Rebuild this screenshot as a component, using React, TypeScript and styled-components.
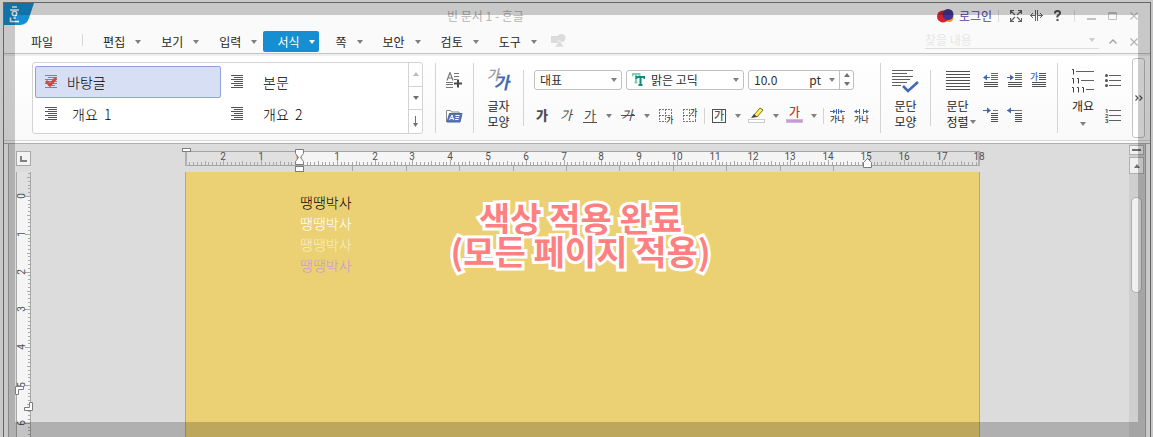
import React from "react";
import styled, { createGlobalStyle, css } from "styled-components";

const fontStack = '"Noto Sans CJK KR", "Noto Sans", sans-serif';

const GlobalStyle = createGlobalStyle`
  * { box-sizing: border-box; }
  body {
    margin: 0;
    background: #fafafa;
    color: #262626;
    font: 12px/16px ${fontStack};
  }
  button, input, select {
    margin: 0;
    padding: 0;
    border: 0;
    background: transparent;
    color: inherit;
    font: inherit;
    outline: 0;
  }
  svg { display: block; flex: none; }
`;

/* ---------- window frame ---------- */

const Screen = styled.div`
  height: 100vh;
  padding: 2px 2px 0 3px;
  overflow: hidden;
`;

const CaptureFrame = styled.div`
  position: fixed;
  inset: 0;
  border: 15px solid rgba(0, 0, 0, 0.2);
  pointer-events: none;
`;

const Window = styled.div`
  display: flex;
  flex-direction: column;
  height: 100%;
  border: 1px solid #808080;
  border-bottom: 0;
`;

const TitleBar = styled.header`
  display: flex;
  align-items: center;
  height: 25px;
`;

const Logo = styled.svg`
  align-self: flex-start;
`;

const Title = styled.h1`
  flex: 1;
  margin: 0;
  text-align: center;
  font: 12px/16px ${fontStack};
  color: #b4b4b4;
`;

const LoginLink = styled.a`
  display: flex;
  align-items: center;
  gap: 5px;
  margin-right: 6px;
  color: #5443a5;
  text-decoration: none;
`;

const TitleDivider = styled.span`
  width: 1px;
  height: 12px;
  background: #dcdcdc;
`;

const TitleButton = styled.button<{ $faint?: boolean }>`
  display: flex;
  align-items: center;
  justify-content: center;
  width: 21px;
  height: 21px;
  color: ${(p) => (p.$faint ? "#c2c2c2" : "#606060")};
`;

const TitleGroup = styled.div`
  display: flex;
  margin: 0 6px;
`;

/* ---------- menu bar ---------- */

const MenuBar = styled.nav`
  display: flex;
  align-items: flex-end;
  height: 26px;
  padding-bottom: 1px;
  border-bottom: 1px solid #c3c3c3;
`;

const FileMenu = styled.button`
  height: 21px;
  padding: 0 29px 0 27px;
`;

const MenuDivider = styled.span`
  align-self: center;
  width: 1px;
  height: 12px;
  margin-right: 6px;
  background: #d5d5d5;
`;

const MenuItem = styled.button<{ $active?: boolean }>`
  display: flex;
  align-items: center;
  gap: 10px;
  height: 21px;
  margin-right: 2px;
  padding: 0 4px 0 14px;
  border-radius: 2px;
  color: ${(p) => (p.$active ? "#ffffff" : "#262626")};
  background: ${(p) => (p.$active ? "#158fd1" : "transparent")};
  svg { color: ${(p) => (p.$active ? "#ffffff" : "#808080")}; }
`;

const MenuGlyph = styled.span`
  align-self: center;
  margin-left: 8px;
`;

const SearchBox = styled.label`
  display: flex;
  align-items: center;
  width: 174px;
  height: 18px;
  margin-left: auto;
  margin-bottom: 3px;
  padding-right: 4px;
  border-bottom: 1px solid #dedede;
  color: #cccccc;
  input {
    flex: 1;
    min-width: 0;
    &::placeholder { color: #e6e6e6; opacity: 1; }
  }
`;

const MenuTools = styled.div`
  display: flex;
  margin: 0 6px 0 3px;
`;

/* ---------- ribbon ---------- */

const RibbonShell = styled.section`
  padding-top: 2px;
  background: #efefef;
`;

const Ribbon = styled.div`
  display: flex;
  align-items: center;
  height: 85px;
  padding: 0 5px 1px 28px;
  border-bottom: 1px solid #d8d8d8;
  background: linear-gradient(#ffffff, #f9f9f9);
`;

const RibbonFoot = styled.div`
  height: 3px;
  border-bottom: 1px solid #adadad;
  background: #fbfbfb;
`;

const Divider = styled.span<{ $short?: boolean }>`
  flex: none;
  width: 1px;
  height: ${(p) => (p.$short ? 56 : 70)}px;
  background: #d4d4d4;
`;

const Gallery = styled.div`
  display: flex;
  flex: none;
  width: 391px;
  height: 72px;
  margin-right: 12px;
  border: 1px solid #d3d3d3;
  border-radius: 3px;
  background: #ffffff;
`;

const GalleryGrid = styled.div`
  display: grid;
  flex: 1;
  grid-template-columns: 186px 186px;
  grid-template-rows: 32px 32px;
  padding: 3px 0 0 2px;
`;

const StyleItem = styled.button<{ $selected?: boolean; $gap: number }>`
  display: flex;
  align-items: center;
  gap: ${(p) => p.$gap}px;
  padding: 0 9px;
  border: 1px solid ${(p) => (p.$selected ? "#8ea2dc" : "transparent")};
  border-radius: 2px;
  background: ${(p) => (p.$selected ? "#d7dff4" : "transparent")};
  color: #000000;
  font-size: 14px;
  font-weight: 300;
  white-space: pre;
`;

const GalleryScroll = styled.div`
  display: grid;
  grid-template-rows: 1fr 1fr 1fr;
  width: 14px;
  border-left: 1px solid #d3d3d3;
`;

const GalleryScrollButton = styled.button<{ $faint?: boolean }>`
  display: flex;
  align-items: center;
  justify-content: center;
  color: ${(p) => (p.$faint ? "#bdbdbd" : "#707070")};
  & + & { border-top: 1px solid #d3d3d3; }
`;

const IconGrid = styled.div<{ $columns: number; $wide?: boolean }>`
  display: grid;
  flex: none;
  grid-template-columns: repeat(${(p) => p.$columns}, ${(p) => (p.$wide ? 37 : 24)}px);
  grid-auto-rows: 36px;
`;

const IconButton = styled.button`
  display: flex;
  align-items: center;
  justify-content: center;
`;

const BigButton = styled.button<{ $width: number; $indent?: number }>`
  display: flex;
  flex: none;
  flex-direction: column;
  align-items: center;
  width: ${(p) => p.$width}px;
  height: 72px;
  margin-left: ${(p) => p.$indent ?? 0}px;
  padding-top: 7px;
  > svg:first-child { margin-bottom: 5px; }
`;

const LabelWithArrow = styled.span`
  display: flex;
  align-items: center;
  gap: 1px;
  padding-left: 7px;
  svg { color: #808080; }
`;

const CharGroup = styled.div`
  display: flex;
  flex: none;
  flex-direction: column;
  gap: 14px;
  height: 72px;
  padding: 8px 6px 0;
`;

const ComboRow = styled.div`
  display: flex;
  gap: 4px;
  padding-left: 4px;
`;

const Combo = styled.div<{ $width: number }>`
  display: flex;
  align-items: center;
  width: ${(p) => p.$width}px;
  height: 20px;
  padding-left: 5px;
  border: 1px solid #c0c0c0;
  border-radius: 3px;
  background: #ffffff;
  color: #303030;
  select, input {
    flex: 1;
    min-width: 0;
    height: 18px;
    appearance: none;
  }
`;

const ComboIcon = styled.span`
  margin-right: 6px;
`;

const ComboArrow = styled.span<{ $spaced?: boolean }>`
  display: flex;
  justify-content: center;
  width: 14px;
  margin-left: ${(p) => (p.$spaced ? 4 : 0)}px;
  color: #808080;
`;

const Spinner = styled.span`
  display: flex;
  flex-direction: column;
  width: 14px;
  height: 18px;
  border-left: 1px solid #c0c0c0;
  button {
    display: flex;
    flex: 1;
    align-items: center;
    justify-content: center;
    color: #707070;
  }
`;

const ToolRow = styled.div`
  display: flex;
  align-items: center;
  height: 24px;
`;

const Tool = styled.button<{ $arrow?: boolean }>`
  display: flex;
  align-items: center;
  justify-content: center;
  width: ${(p) => (p.$arrow ? 14 : 24)}px;
  height: 24px;
  color: #808080;
`;

const ToolDivider = styled.span`
  width: 1px;
  height: 16px;
  margin: 0 2px;
  background: #d4d4d4;
`;

const GroupGap = styled.span`
  flex: none;
  width: 7px;
`;

const OutlineArrow = styled.span`
  display: flex;
  align-items: center;
  height: 20px;
  color: #808080;
`;

const MoreButton = styled.button`
  display: flex;
  flex: none;
  align-items: center;
  justify-content: center;
  width: 13px;
  height: 80px;
  margin-left: auto;
  border: 1px solid #c4c4c4;
  border-radius: 3px;
  background: #ffffff;
`;

/* ---------- workspace ---------- */

const Workspace = styled.main`
  display: flex;
  flex: 1;
  min-height: 0;
  margin: 0 4px;
  border: solid #ababab;
  border-width: 0 1px;
  background: #dcdcdc;
  overflow: hidden;
`;

const RulerColumn = styled.div`
  display: flex;
  flex: none;
  flex-direction: column;
  gap: 6px;
  width: 22px;
  padding: 7px 0 0 7px;
`;

const TabCorner = styled.button`
  display: flex;
  flex: none;
  align-items: center;
  justify-content: center;
  width: 15px;
  height: 15px;
  border: 1px solid #a8a8a8;
  background: #f3f3f3;
`;

const Canvas = styled.div`
  display: flex;
  flex: 1;
  flex-direction: column;
  align-items: center;
  min-width: 0;
  padding: 4px 0 0 5px;
`;

const RulerSvg = styled.svg`
  overflow: visible;
  font: 10px Roboto, sans-serif;
`;

const Page = styled.article`
  position: relative;
  flex: 1;
  width: 795px;
  padding: 20px 114px;
  border: solid #a8a8a8;
  border-width: 0 1px;
  background: #ebd173;
`;

const Line = styled.p<{ $color: string }>`
  margin: 0;
  font-size: 14px;
  font-weight: 300;
  line-height: 21px;
  color: ${(p) => p.$color};
`;

const Caption = styled.strong`
  position: absolute;
  top: 29px;
  left: 0;
  right: 0;
  padding-right: 4px;
  text-align: center;
  font: 700 34px/33px ${fontStack};
  color: #ff8080;
  -webkit-text-stroke: 6px #ffffff;
  paint-order: stroke fill;
`;

const ScrollBar = styled.div`
  display: flex;
  flex: none;
  flex-direction: column;
  align-items: center;
  width: 16px;
  padding: 1px 1px 0 0;
  background: #cfcfcf;
`;

const scrollBox = css`
  display: flex;
  flex: none;
  align-items: center;
  justify-content: center;
  width: 15px;
  border: 1px solid #b0b0b0;
  background: #f0f0f0;
  color: #707070;
`;

const SplitButton = styled.button`
  ${scrollBox}
  height: 10px;
  margin-bottom: 2px;
`;

const ScrollUp = styled.button`
  ${scrollBox}
  height: 17px;
  margin-bottom: 23px;
`;

const ScrollThumb = styled.div`
  width: 11px;
  height: 96px;
  border: 1px solid #b0b0b0;
  border-radius: 5px;
  background: #f0f0f0;
`;

/* ---------- icons ---------- */

const Down = () => (
  <svg width="6" height="4" viewBox="0 0 6 4" fill="currentColor"><path d="M0 0h6L3 4z" /></svg>
);
const Up = () => (
  <svg width="6" height="4" viewBox="0 0 6 4" fill="currentColor"><path d="M0 4h6L3 0z" /></svg>
);

const Glyph = ({ x, y, size = 13, fill = "#505050", weight = 400, children }: {
  x: number; y: number; size?: number; fill?: string; weight?: number; children: React.ReactNode;
}) => (
  <text x={x} y={y} fontSize={size} fill={fill} fontWeight={weight} fontFamily={fontStack}>{children}</text>
);

const StyleLines = ({ checked }: { checked?: boolean }) => (
  <svg width="12" height="13" viewBox="0 0 12 13">
    <path
      d={checked ? "M0 .5h12M3 2.500h9M0 4.500h12M3 6.500h9M0 8.500h12M3 10.500h7M0 12.500h12" : "M0 .5h12M3 2.500h9M0 4.500h12M3 6.500h9M0 8.500h12M3 10.500h9M0 12.500h12"}
      stroke={checked ? "#7d8499" : "#555"}
    />
    {checked && <path d="M1 6l4 4 6-7" fill="none" stroke="#cf4a3c" strokeWidth="3" />}
  </svg>
);

const AddStyleIcon = () => (
  <svg width="17" height="16" viewBox="0 0 17 16">
    <path d="M1 8.500L4 .5 7 8.500M2 6h4.500" fill="none" stroke="#777" strokeWidth="1.200" />
    <path d="M8 1.500h5M8 4.500h5M8 7.500h3M0 10.500h7M0 12.500h7M0 15.500h7" stroke="#777" />
    <path d="M8 11.500h8M12 7.500v8" stroke="#4a4a4a" strokeWidth="2" />
  </svg>
);

const StyleFolderIcon = () => (
  <svg width="17" height="14" viewBox="0 0 17 14">
    <path d="M.5 13V1.500h4l1 1.500h7.500v2" fill="#fff" stroke="#888" />
    <path d="M3.500 4.500h12.500l-2 8.500h-13z" fill="#5775b8" stroke="#4565ad" />
    <path d="M3.500 11L6 6l1.500 5M4.500 9.500h3M9.500 6.500h4M9.500 8.500h3.500M9 10.500h3.500" fill="none" stroke="#fff" />
  </svg>
);

const CharShapeIcon = () => (
  <svg width="24" height="24" viewBox="0 0 24 24" overflow="visible">
    <g transform="skewX(-12)">
      <Glyph x={2} y={11} size={14} fill="#9a9a9a" weight={500}>가</Glyph>
      <Glyph x={11} y={20} size={17} fill="#4468b4" weight={700}>가</Glyph>
    </g>
  </svg>
);

const TrueTypeIcon = () => (
  <svg width="13" height="13" viewBox="0 0 13 13" fill="none">
    <path d="M.5 3.500V1h7v2M4 1v8M2.500 9.500h3" stroke="#84cdb8" strokeWidth="2" />
    <path d="M4.500 6V4h8v2M8.500 4v8M6.500 12h4" stroke="#108c7b" strokeWidth="2" />
  </svg>
);

const LetterIcon = ({ kind }: { kind: "bold" | "italic" | "underline" | "strike" | "boxed" }) => (
  <svg width="14" height="16" viewBox="0 0 14 16" overflow="visible">
    {kind === "bold" && <Glyph x={1} y={12} weight={900}>가</Glyph>}
    {kind === "italic" && <g transform="translate(3 0) skewX(-14)"><Glyph x={1} y={12}>가</Glyph></g>}
    {kind === "underline" && <><Glyph x={1} y={12}>가</Glyph><path d="M0 14.500h14" stroke="#505050" /></>}
    {kind === "strike" && <><g transform="translate(3 0) skewX(-14)"><Glyph x={0} y={12}>가</Glyph></g><path d="M0 7.500h14" stroke="#505050" /></>}
    {kind === "boxed" && <><rect x=".5" y="1.500" width="13" height="13" fill="#fff" stroke="#505050" /><Glyph x={2} y={12} size={11} weight={500}>가</Glyph></>}
  </svg>
);

const ScriptIcon = ({ sup }: { sup?: boolean }) => (
  <svg width="16" height="16" viewBox="0 0 16 16" overflow="visible">
    <path
      d={sup
        ? "M1.500 1v13M7.500 1v13M1 1.500h7M1 7.500h13M1 13.500h13M13.500 8v6"
        : "M1.500 1v13M7.500 1v13M1 1.500h13M1 7.500h13M1 13.500h7M13.500 1v7"}
      fill="none" stroke="#777" strokeDasharray="2 1"
    />
    <rect x="8" y={sup ? 0 : 8} width="8" height="7" fill="#fdfdfd" />
    <Glyph x={8} y={sup ? 7 : 15} size={8} fill="#333" weight={500}>가</Glyph>
  </svg>
);

const HighlightIcon = () => (
  <svg width="18" height="17" viewBox="0 0 18 17">
    <path d="M6 8l6-7 3 2-6 7z" fill="#fff24d" stroke="#77722e" />
    <path d="M3 11l3-4 3 3z" fill="#444" />
    <rect x=".5" y="12.500" width="16" height="3" fill="#fff" stroke="#ccc" />
  </svg>
);

const FontColorIcon = () => (
  <svg width="18" height="17" viewBox="0 0 18 17" overflow="visible">
    <Glyph x={3} y={10} size={12} fill="#c03737" weight={500}>가</Glyph>
    <rect x=".5" y="12.500" width="16" height="3" fill="#c49ad8" stroke="#d0b8da" />
  </svg>
);

const SpacingIcon = ({ wide }: { wide?: boolean }) => (
  <svg width="16" height="16" viewBox="0 0 16 16" overflow="visible">
    <path
      d={wide ? "M1 3.500h4M10 3.500h4M5.500 1v5M9.500 1v5" : "M0 3.500h5M10 3.500h5M6.500 1v5M8.500 1v5"}
      stroke="#4468b4"
      fill="none"
    />
    <path d={wide ? "M0 3.500l3-2v4zM15 3.500l-3-2v4z" : "M6 3.500l-3-2v4zM9 3.500l3-2v4z"} fill="#4468b4" />
    <Glyph x={0} y={14} size={8} fill="#333" weight={500}>가나</Glyph>
  </svg>
);

const ParaShapeIcon = () => (
  <svg width="27" height="24" viewBox="0 0 27 24">
    <path d="M0 1.500h21M0 4.500h15M0 7.500h21M0 10.500h18M0 13.500h15M0 16.500h9" stroke="#606060" />
    <path d="M11 17l5 5L26 13" fill="none" stroke="#4468b4" strokeWidth="2.500" />
  </svg>
);

const AlignIcon = () => (
  <svg width="24" height="24" viewBox="0 0 24 24">
    <path d="M0 2.500h24M0 5.500h24M0 8.500h24M0 11.500h24M0 14.500h24M0 17.500h24M0 20.500h24" stroke="#505050" />
  </svg>
);

const IndentIcon = ({ kind }: { kind: "less" | "more" | "drop" | "first" | "hang" }) => (
  <svg width="15" height="14" viewBox="0 0 15 14" overflow="visible">
    {(kind === "less" || kind === "more") && (
      <>
        <path d="M8 .5h7M8 2.500h7M8 4.500h7M8 6.500h7" stroke="#4468b4" />
        <path d="M1 9.500h14M1 11.500h14M1 13.500h14" stroke="#505050" />
        <path d={kind === "less" ? "M1 4.500h6" : "M0 4.500h6"} stroke="#4468b4" />
        <path d={kind === "less" ? "M0 4.500l4-3v6z" : "M7 4.500l-4-3v6z"} fill="#4468b4" />
      </>
    )}
    {kind === "drop" && (
      <>
        <Glyph x={-1} y={7} size={9} fill="#4468b4" weight={500}>가</Glyph>
        <path d="M8 .5h7M8 2.500h7M8 4.500h7M8 6.500h7M1 9.500h14M1 11.500h14M1 13.500h14" stroke="#505050" />
      </>
    )}
    {(kind === "first" || kind === "hang") && (
      <>
        <path d={kind === "first" ? "M10 1.500h5" : "M7 1.500h8"} stroke="#777" />
        <path d="M8 4.500h7M8 6.500h7M8 8.500h7M8 10.500h7M8 12.500h7" stroke="#505050" />
        <path d="M0 1.500h7" stroke="#4468b4" />
        <path d={kind === "first" ? "M8 1.500l-4-3v6z" : "M0 1.500l4-3v6z"} fill="#4468b4" />
      </>
    )}
  </svg>
);

const OutlineIcon = () => (
  <svg width="24" height="24" viewBox="0 0 24 24" fill="none">
    <path d="M5 2.500h18M10 11.500h13M15 20.500h8" stroke="#606060" />
    <path d="M1 .5h1.500v5M1 9.500h1.500v5M6 9.500h1.500v5M1 18.500h1.500v5M6 18.500h1.500v5M11 18.500h1.500v5" stroke="#404040" />
  </svg>
);

const BulletsIcon = () => (
  <svg width="16" height="14" viewBox="0 0 16 14">
    <path d="M4 2.500h12M4 7.500h12M4 12.500h12" stroke="#606060" />
    <g fill="#505050"><circle cx="1.500" cy="2.500" r="1.500" /><circle cx="1.500" cy="7.500" r="1.500" /><circle cx="1.500" cy="12.500" r="1.500" /></g>
  </svg>
);

const NumbersIcon = () => (
  <svg width="16" height="15" viewBox="0 0 16 15" fontFamily="Roboto, sans-serif" fontSize="6" fontWeight="700" fill="#444" overflow="visible">
    <path d="M4 2.500h12M4 7.500h12M4 12.500h12" stroke="#606060" />
    <text x="0" y="5">1</text>
    <text x="0" y="10">2</text>
    <text x="0" y="15">3</text>
  </svg>
);

/* ---------- rulers ---------- */

const PX_PER_CM = 37.8;
const at = (cm: number) => Math.round(cm * PX_PER_CM);

const range = (from: number, to: number) =>
  Array.from({ length: to - from + 1 }, (_, i) => from + i);

const HorizontalRuler = () => {
  const zero = 114;
  return (
    <RulerSvg width="795" height="24" viewBox="0 0 795 24" aria-label="가로 눈금자">
      <g shapeRendering="crispEdges">
        <rect x="0" y="3" width="795" height="15" fill="#e0e0e0" />
        <rect x={zero} y="3" width="568" height="15" fill="#f5f5f5" />
        <path d="M0 3.500h795M0 17.500h795" stroke="#a3a3a3" />
        <path d="M1 4v14M794 4v14" stroke="#b0b0b0" strokeWidth="2" />
        {range(-29, 179).map((t) => {
          const h = t % 10 === 0 ? 5 : t % 5 === 0 ? 4 : 3;
          return <rect key={t} x={zero + at(t / 10)} y={17 - h} width="1" height={h} fill="#a8a8a8" />;
        })}
        {range(1, 10).map((t) => (
          <rect key={t} x={zero + Math.round(t * 53.4)} y="18" width="1" height="5" fill="#a8a8a8" />
        ))}
      </g>
      <g fill="#505050" textAnchor="middle">
        {range(-2, 18).map((t) => (
          <text key={t} x={zero + at(t)} y="12">{Math.abs(t)}</text>
        ))}
      </g>
      <rect x="-2.500" y=".5" width="8" height="3" fill="#fff" stroke="#7d7d7d" />
      <g fill="#fff" stroke="#7d7d7d">
        <path d="M110.500 1.500h8v4l-3 4 3 4v3h-8v-3l3-4-3-4z" />
        <rect x="110.500" y="18.500" width="8" height="5" />
        <path d="M678.500 19.500v-5l4-4 4 4v5z" />
      </g>
    </RulerSvg>
  );
};

const VerticalRuler = () => {
  const zero = 24;
  return (
    <RulerSvg width="15" height="480" viewBox="0 0 15 480" aria-label="세로 눈금자">
      <g shapeRendering="crispEdges">
        <rect width="15" height="24" fill="#e0e0e0" />
        <rect y={zero} width="15" height="456" fill="#f5f5f5" />
        <path d="M.5 0v480M14.500 0v480" stroke="#a8a8a8" />
        {range(-6, 119).map((t) => {
          const w = t % 10 === 0 ? 5 : t % 5 === 0 ? 3 : 2;
          return <rect key={t} x={14 - w} y={zero + at(t / 10)} width={w} height="1" fill="#a8a8a8" />;
        })}
      </g>
      <g fill="#505050" textAnchor="middle">
        {range(0, 11).map((t) => (
          <text key={t} transform={`translate(9 ${zero + at(t)}) rotate(-90)`}>{t}</text>
        ))}
      </g>
      <g fill="#fff" stroke="#7d7d7d">
        <path d="M-.5 214.500h8v3h-5v5h-3z" />
        <path d="M16.500 230.500v8h-8v-3h5v-5z" />
      </g>
    </RulerSvg>
  );
};

const menus = ["편집", "보기", "입력", "서식", "쪽", "보안", "검토", "도구"];

export default function App() {
  return (
    <>
      <GlobalStyle />
      <Screen>
        <Window>
          <TitleBar>
            <Logo width="30" height="22" viewBox="0 0 30 22">
              <path d="M0 0h30l-5 15q-2 7-9 7H0z" fill="#158fd1" />
              <g fill="none" stroke="#fff" strokeWidth="2">
                <path d="M8 4h5M6 7h9M6.500 14.500v4H15" strokeWidth="1.600" />
                <circle cx="10.500" cy="10.500" r="2.200" strokeWidth="1.600" />
                <path d="M10.500 14v2" />
              </g>
            </Logo>
            <Title>빈 문서 1 - ᄒᆞᆫ글</Title>
            <LoginLink href="#login">
              <svg width="17" height="14" viewBox="0 0 17 14">
                <circle cx="12" cy="8.500" r="4.500" fill="#f59a1e" />
                <circle cx="6" cy="7.500" r="6" fill="#d2232f" />
                <circle cx="11" cy="5.500" r="5.500" fill="#46338f" />
              </svg>
              로그인
            </LoginLink>
            <TitleDivider />
            <TitleGroup>
              <TitleButton aria-label="전체 화면">
                <svg width="12" height="12" viewBox="0 0 12 12" fill="none" stroke="currentColor">
                  <path d="M.5 4V.5H4M8 .5h3.500V4M11.500 8v3.500H8M4 11.500H.5V8M1 1l4 4M11 1L7 5M11 11L7 7M1 11l4-4" strokeWidth="1.200" />
                </svg>
              </TitleButton>
              <TitleButton aria-label="너비 맞춤">
                <svg width="13" height="11" viewBox="0 0 13 11" fill="none" stroke="currentColor">
                  <path d="M5.500 0v11M7.500 0v11M0 5.500h5M8 5.500h5M3 3L.5 5.500 3 8M10 3l2.500 2.500L10 8" />
                </svg>
              </TitleButton>
              <TitleButton aria-label="도움말">
                <svg width="7" height="11" viewBox="0 0 7 11" fill="none" stroke="#505050" strokeWidth="2">
                  <path d="M1 3.500V3q0-2 2.500-2T6 3q0 1.500-1.500 2.200T3.500 7.500M3.500 9v2" />
                </svg>
              </TitleButton>
            </TitleGroup>
            <TitleDivider />
            <TitleGroup>
              <TitleButton $faint aria-label="최소화">
                <svg width="9" height="9" viewBox="0 0 9 9" fill="currentColor"><path d="M0 7h9v2H0z" /></svg>
              </TitleButton>
              <TitleButton $faint aria-label="최대화">
                <svg width="9" height="8" viewBox="0 0 9 8" fill="none" stroke="currentColor"><path d="M.5 .5h8v7h-8zM.5 1.500h8" /></svg>
              </TitleButton>
              <TitleButton $faint aria-label="닫기">
                <svg width="8" height="8" viewBox="0 0 8 8" stroke="currentColor"><path d="M.5 .5l7 7M7.500 .5l-7 7" strokeWidth="1.300" /></svg>
              </TitleButton>
            </TitleGroup>
          </TitleBar>

          <MenuBar>
            <FileMenu>파일</FileMenu>
            <MenuDivider />
            {menus.map((m) => (
              <MenuItem key={m} $active={m === "서식"}>{m}<Down /></MenuItem>
            ))}
            <MenuGlyph>
              <svg width="15" height="13" viewBox="0 0 15 13" fill="#dcdcdc">
                <path d="M0 2h7v7H0z" /><circle cx="10.500" cy="4" r="4" /><path d="M8.500 6l4.500 7H4z" stroke="#fafafa" strokeWidth=".6" />
              </svg>
            </MenuGlyph>
            <SearchBox>
              <input aria-label="찾을 내용" placeholder="찾을 내용" />
              <Down />
            </SearchBox>
            <MenuTools>
              <TitleButton $faint aria-label="리본 접기">
                <svg width="8" height="5" viewBox="0 0 8 5" fill="none" stroke="#a0a0a0" strokeWidth="1.300"><path d="M.5 4.500L4 1l3.500 3.500" /></svg>
              </TitleButton>
              <TitleButton $faint aria-label="문서 닫기">
                <svg width="8" height="8" viewBox="0 0 8 8" stroke="#b4b4b4"><path d="M.5 .5l7 7M7.500 .5l-7 7" strokeWidth="1.300" /></svg>
              </TitleButton>
            </MenuTools>
          </MenuBar>

          <RibbonShell>
            <Ribbon>
              <Gallery>
                <GalleryGrid>
                  <StyleItem $gap={10} $selected aria-pressed="true"><StyleLines checked />바탕글</StyleItem>
                  <StyleItem $gap={20}><StyleLines />본문</StyleItem>
                  <StyleItem $gap={15}><StyleLines />개요  1</StyleItem>
                  <StyleItem $gap={20}><StyleLines />개요  2</StyleItem>
                </GalleryGrid>
                <GalleryScroll>
                  <GalleryScrollButton $faint aria-label="위로"><Up /></GalleryScrollButton>
                  <GalleryScrollButton aria-label="아래로"><Down /></GalleryScrollButton>
                  <GalleryScrollButton aria-label="모두 보기">
                    <svg width="7" height="11" viewBox="0 0 7 11"><path d="M3.500 0v10" stroke="currentColor" /><path d="M1 7h5l-2.500 4z" fill="currentColor" /></svg>
                  </GalleryScrollButton>
                </GalleryScroll>
              </Gallery>
              <Divider />
              <IconGrid $columns={1} $wide>
                <IconButton aria-label="스타일 추가"><AddStyleIcon /></IconButton>
                <IconButton aria-label="스타일마당"><StyleFolderIcon /></IconButton>
              </IconGrid>
              <Divider />
              <BigButton $width={49}><CharShapeIcon /><span>글자</span><span>모양</span></BigButton>
              <Divider $short />

              <CharGroup>
                <ComboRow>
                  <Combo $width={88}>
                    <select aria-label="언어"><option>대표</option></select>
                    <ComboArrow><Down /></ComboArrow>
                  </Combo>
                  <Combo $width={118}>
                    <ComboIcon><TrueTypeIcon /></ComboIcon>
                    <select aria-label="글꼴"><option>맑은 고딕</option></select>
                    <ComboArrow><Down /></ComboArrow>
                  </Combo>
                  <Combo $width={106}>
                    <input aria-label="글자 크기" defaultValue="10.0" />
                    pt
                    <ComboArrow $spaced><Down /></ComboArrow>
                    <Spinner>
                      <button aria-label="크게"><Up /></button>
                      <button aria-label="작게"><Down /></button>
                    </Spinner>
                  </Combo>
                </ComboRow>
                <ToolRow>
                  <Tool aria-label="진하게"><LetterIcon kind="bold" /></Tool>
                  <Tool aria-label="기울임"><LetterIcon kind="italic" /></Tool>
                  <Tool aria-label="밑줄"><LetterIcon kind="underline" /></Tool>
                  <Tool $arrow aria-label="밑줄 종류"><Down /></Tool>
                  <Tool aria-label="취소선"><LetterIcon kind="strike" /></Tool>
                  <Tool $arrow aria-label="취소선 종류"><Down /></Tool>
                  <Tool aria-label="아래 첨자"><ScriptIcon /></Tool>
                  <Tool aria-label="위 첨자"><ScriptIcon sup /></Tool>
                  <ToolDivider />
                  <Tool aria-label="글자 테두리"><LetterIcon kind="boxed" /></Tool>
                  <Tool $arrow aria-label="테두리 종류"><Down /></Tool>
                  <Tool aria-label="형광펜"><HighlightIcon /></Tool>
                  <Tool $arrow aria-label="형광펜 색"><Down /></Tool>
                  <Tool aria-label="글자 색"><FontColorIcon /></Tool>
                  <Tool $arrow aria-label="글자 색 선택"><Down /></Tool>
                  <ToolDivider />
                  <Tool aria-label="자간 좁게"><SpacingIcon /></Tool>
                  <Tool aria-label="자간 넓게"><SpacingIcon wide /></Tool>
                </ToolRow>
              </CharGroup>

              <Divider />
              <BigButton $width={49}><ParaShapeIcon /><span>문단</span><span>모양</span></BigButton>
              <Divider $short />
              <BigButton $width={41} $indent={6}>
                <AlignIcon /><span>문단</span><LabelWithArrow>정렬<Down /></LabelWithArrow>
              </BigButton>
              <IconGrid $columns={3}>
                <IconButton aria-label="왼쪽 여백 줄이기"><IndentIcon kind="less" /></IconButton>
                <IconButton aria-label="왼쪽 여백 늘리기"><IndentIcon kind="more" /></IconButton>
                <IconButton aria-label="문단 첫 글자 장식"><IndentIcon kind="drop" /></IconButton>
                <IconButton aria-label="첫 줄 들여쓰기"><IndentIcon kind="first" /></IconButton>
                <IconButton aria-label="첫 줄 내어쓰기"><IndentIcon kind="hang" /></IconButton>
              </IconGrid>
              <GroupGap />
              <Divider />
              <BigButton $width={36} $indent={7}><OutlineIcon /><span>개요</span><OutlineArrow><Down /></OutlineArrow></BigButton>
              <IconGrid $columns={1}>
                <IconButton aria-label="글머리표"><BulletsIcon /></IconButton>
                <IconButton aria-label="문단 번호"><NumbersIcon /></IconButton>
              </IconGrid>
              <MoreButton aria-label="더 보기">
                <svg width="8" height="6" viewBox="0 0 8 6" fill="none" stroke="#505050" strokeWidth="1.200"><path d="M.5 .5L3 3 .5 5.500M4.500 .5L7 3 4.500 5.500" /></svg>
              </MoreButton>
            </Ribbon>
            <RibbonFoot />
          </RibbonShell>

          <Workspace>
            <RulerColumn>
              <TabCorner aria-label="탭 종류">
                <svg width="7" height="6" viewBox="0 0 7 6"><path d="M1 0v5h6" fill="none" stroke="#808080" strokeWidth="2" /></svg>
              </TabCorner>
              <VerticalRuler />
            </RulerColumn>
            <Canvas>
              <HorizontalRuler />
              <Page>
                <Line $color="#000000">땡땡박사</Line>
                <Line $color="#ffffff">땡땡박사</Line>
                <Line $color="#f8edc8">땡땡박사</Line>
                <Line $color="#c59bd3">땡땡박사</Line>
                <Caption>색상 적용 완료<br />(모든 페이지 적용)</Caption>
              </Page>
            </Canvas>
            <ScrollBar>
              <SplitButton aria-label="화면 나누기">
                <svg width="9" height="2" viewBox="0 0 9 2"><path d="M0 0h9v2H0z" fill="currentColor" /></svg>
              </SplitButton>
              <ScrollUp aria-label="위로 스크롤"><Up /></ScrollUp>
              <ScrollThumb />
            </ScrollBar>
          </Workspace>
        </Window>
      </Screen>
      <CaptureFrame />
    </>
  );
}
